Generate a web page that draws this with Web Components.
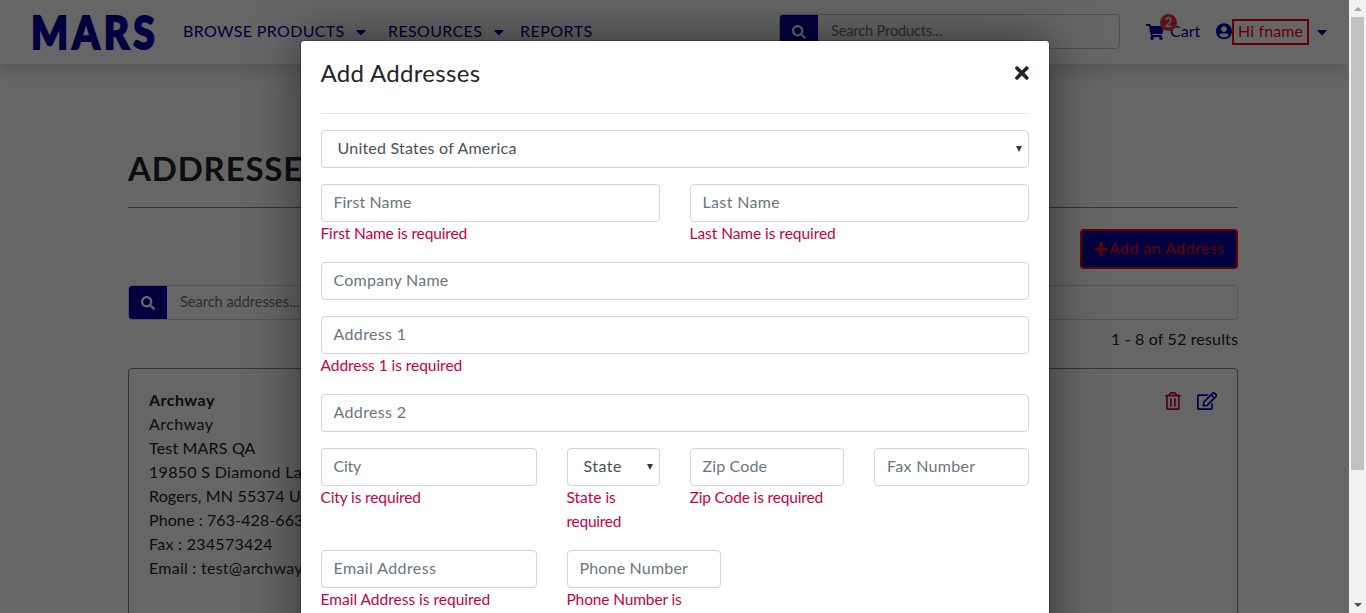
<!DOCTYPE html>
<html lang="en">
<head>
<meta charset="utf-8">
<title>Addresses</title>
<style>
html,body{margin:0;height:100%;overflow:hidden;background:#fff}
body{font:400 16px/24px Lato,"Noto Sans",sans-serif;color:#212529}
</style>
</head>
<body>
<app-page></app-page>
<script>
const ICONS={
caret:[320,'M31.3 192h257.3c17.8 0 26.7 21.5 14.1 34.1L174.1 354.8c-7.8 7.8-20.5 7.8-28.3 0L17.2 226.1C4.6 213.5 13.5 192 31.3 192z'],
search:[512,'M505 442.7L405.3 343c-4.5-4.5-10.6-7-17-7H372c27.6-35.3 44-79.7 44-128C416 93.1 322.9 0 208 0S0 93.1 0 208s93.1 208 208 208c48.3 0 92.7-16.4 128-44v16.3c0 6.4 2.5 12.5 7 17l99.7 99.7c9.4 9.4 24.6 9.4 33.9 0l28.3-28.3c9.4-9.4 9.4-24.6.1-34zM208 336c-70.7 0-128-57.2-128-128 0-70.7 57.2-128 128-128 70.7 0 128 57.2 128 128 0 70.7-57.2 128-128 128z'],
times:[352,'M242.72 256l100.07-100.07c12.28-12.28 12.28-32.19 0-44.48l-22.24-22.24c-12.28-12.28-32.19-12.28-44.48 0L176 189.28 75.93 89.21c-12.28-12.28-32.19-12.28-44.48 0L9.21 111.45c-12.28 12.28-12.28 32.19 0 44.48L109.28 256 9.21 356.07c-12.28 12.28-12.28 32.19 0 44.48l22.24 22.24c12.28 12.28 32.2 12.28 44.48 0L176 322.72l100.07 100.07c12.28 12.28 32.2 12.28 44.48 0l22.24-22.24c12.28-12.28 12.28-32.19 0-44.48L242.72 256z'],
cart:[576,'M528.12 301.319l47.273-208C578.806 78.301 567.391 64 551.99 64H159.208l-9.166-44.81C147.758 8.021 137.93 0 126.529 0H24C10.745 0 0 10.745 0 24v16c0 13.255 10.745 24 24 24h69.883l70.248 343.435C147.325 417.1 136 435.222 136 456c0 30.928 25.072 56 56 56s56-25.072 56-56c0-15.674-6.447-29.835-16.824-40h209.647C430.447 426.165 424 440.326 424 456c0 30.928 25.072 56 56 56s56-25.072 56-56c0-22.172-12.888-41.332-31.579-50.405l5.517-24.276c3.413-15.018-8.002-29.319-23.403-29.319H218.117l-6.545-32h293.145c11.206 0 20.92-7.754 23.403-18.681z'],
user:[496,'M248 8C111 8 0 119 0 256s111 248 248 248 248-111 248-248S385 8 248 8zm0 96c48.6 0 88 39.4 88 88s-39.4 88-88 88-88-39.4-88-88 39.4-88 88-88zm0 344c-58.7 0-111.3-26.6-146.5-68.2 18.8-35.4 55.6-59.8 98.5-59.8 2.4 0 4.8.4 7.1 1.1 13 4.2 26.6 6.9 40.9 6.9 14.3 0 28-2.7 40.9-6.9 2.3-.7 4.7-1.1 7.1-1.1 42.9 0 79.7 24.4 98.5 59.8C359.3 421.4 306.7 448 248 448z'],
plus:[448,'M416 208H272V64c0-17.67-14.33-32-32-32h-32c-17.67 0-32 14.33-32 32v144H32c-17.67 0-32 14.33-32 32v32c0 17.67 14.33 32 32 32h144v144c0 17.67 14.33 32 32 32h32c17.67 0 32-14.33 32-32V304h144c17.67 0 32-14.33 32-32v-32c0-17.67-14.33-32-32-32z'],
trash:[448,'M268 416h24a12 12 0 0 0 12-12V188a12 12 0 0 0-12-12h-24a12 12 0 0 0-12 12v216a12 12 0 0 0 12 12zM432 80h-82.41l-34-56.7A48 48 0 0 0 274.41 0H173.59a48 48 0 0 0-41.16 23.3L98.41 80H16A16 16 0 0 0 0 96v16a16 16 0 0 0 16 16h16v336a48 48 0 0 0 48 48h288a48 48 0 0 0 48-48V128h16a16 16 0 0 0 16-16V96a16 16 0 0 0-16-16zM171.84 50.91A6 6 0 0 1 177 48h94a6 6 0 0 1 5.15 2.91L293.61 80H154.39zM368 464H80V128h288zm-212-48h24a12 12 0 0 0 12-12V188a12 12 0 0 0-12-12h-24a12 12 0 0 0-12 12v216a12 12 0 0 0 12 12z'],
edit:[576,'M402.3 344.9l32-32c5-5 13.7-1.5 13.7 5.7V464c0 26.5-21.5 48-48 48H48c-26.5 0-48-21.5-48-48V112c0-26.5 21.5-48 48-48h273.5c7.1 0 10.7 8.6 5.7 13.7l-32 32c-1.5 1.5-3.5 2.3-5.7 2.3H48v352h352V350.5c0-2.1.8-4.1 2.3-5.6zm156.6-201.8L296.3 405.7l-90.4 10c-26.2 2.9-48.5-19.2-45.6-45.6l10-90.4L432.9 17.1c22.9-22.9 59.9-22.9 82.7 0l43.2 43.2c22.9 22.9 22.9 60 .1 82.8zM460.1 174L402 115.9 216.2 301.8l-7.3 65.3 65.3-7.3L460.1 174zm64.8-79.7l-43.2-43.2c-4.1-4.1-10.8-4.1-14.8 0L436 82l58.1 58.1 30.9-30.9c4-4.2 4-10.8-.1-14.9z']
};
function define(name,render,after){
  customElements.define(name,class extends HTMLElement{
    connectedCallback(){
      if(this.shadowRoot)return;
      this.attachShadow({mode:'open'}).innerHTML=render(this);
      if(after)after(this);
    }
  });
}
const attr=(e,n,d='')=>e.getAttribute(n)??d;

/* SVG icon, sized by its height */
define('app-icon',e=>{
  const [w,d]=ICONS[attr(e,'name')],s=+attr(e,'size','16');
  return `<style>:host{display:block;flex:none;width:${w/512*s}px;height:${s}px}svg{display:block;width:100%;height:100%}</style><svg viewBox="0 0 ${w} 512" fill="currentColor"><path d="${d}"/></svg>`;
});

/* One line of text whose tracking is adjusted to a given width */
define('fit-text',e=>`<style>:host{display:block;flex:none;white-space:nowrap;width:${attr(e,'w')}px;transform:translateY(-1px)}span{display:inline-block;white-space:pre}</style><span>${attr(e,'text')}</span>`,e=>{
  const s=e.shadowRoot.querySelector('span'),n=attr(e,'text').length;
  s.style.letterSpacing=((+attr(e,'w')-s.offsetWidth)/(n-.5)).toFixed(3)+'px';
});

define('nav-bar',()=>`<style>
:host{display:flex;align-items:center;box-sizing:border-box;height:64px;padding-left:32px;color:#0000a0;background:#fff;box-shadow:0 8px 16px rgba(0,0,0,.15);position:relative}
.logo{font-weight:900;font-size:46.5px;line-height:60px;transform:translate(-1px,-1px) scaleX(.84);transform-origin:0 50%;margin-right:-26px;-webkit-text-stroke:2px #0000a0}
.link{margin-top:-1px}
search-box{width:341px;margin-left:187px;margin-top:-1px}
.cart{position:relative;display:flex;align-items:center;margin-left:26px;gap:6px;margin-top:-1px}
.cart fit-text{line-height:16px}
.badge{position:absolute;left:14px;top:-10px;width:17px;height:17px;border-radius:50%;background:#dc3545;color:#fff;font-size:13px;display:grid;place-items:center;line-height:13px}
.hi{box-sizing:border-box;border:2px solid red;color:red;height:26px;line-height:22px;width:77px;padding-left:4px;margin-top:-1px}
</style>
<fit-text class="logo" w="150" text="MARS"></fit-text>
<fit-text class="link" style="margin-left:27px" w="161" text="BROWSE PRODUCTS"></fit-text><app-icon name="caret" style="margin-left:12px;margin-top:-1px"></app-icon>
<fit-text class="link" style="margin-left:22px" w="94" text="RESOURCES"></fit-text><app-icon name="caret" style="margin-left:12px;margin-top:-1px"></app-icon>
<fit-text class="link" style="margin-left:16px" w="72" text="REPORTS"></fit-text>
<search-box text="Search Products..." w="111" solid></search-box>
<div class="cart"><app-icon name="cart"></app-icon><fit-text w="30" text="Cart"></fit-text><span class="badge">2</span></div>
<app-icon name="user" size="16.5" style="margin-left:16px;margin-top:-1px"></app-icon>
<div class="hi"><fit-text w="65" text="Hi fname"></fit-text></div>
<app-icon name="caret" style="margin-left:8px;margin-top:-1px"></app-icon>`);

define('search-box',e=>`<style>
:host{display:flex;box-sizing:border-box;height:35px;border:1px solid ${e.hasAttribute('solid')?'#bfc6d4':'#ced4da'};border-radius:4px;overflow:hidden;background:#fff}
.b{width:38px;background:#0000a0;color:#fff;display:grid;place-items:center;flex:none}
fit-text{font-size:14.5px;line-height:34px;color:#6c757d;margin-left:13px}
</style><div class="b"><app-icon name="search" size="14"></app-icon></div><fit-text w="${attr(e,'w')}" text="${attr(e,'text')}"></fit-text>`);

define('address-card',()=>`<style>
:host{display:flex;justify-content:space-between;box-sizing:border-box;height:300px;border:1px solid #7d8082;border-radius:4px;padding:20px}
.icons{display:flex;gap:16px;margin-top:3px}
</style><div><fit-text style="font-weight:700" w="66" text="Archway"></fit-text>
<fit-text w="64" text="Archway"></fit-text>
<fit-text w="107" text="Test MARS QA"></fit-text>
<fit-text w="170" text="19850 S Diamond Lake"></fit-text>
<fit-text w="171" text="Rogers, MN 55374 USA"></fit-text>
<fit-text w="164" text="Phone : 763-428-6630"></fit-text>
<fit-text w="124" text="Fax : 234573424"></fit-text>
<fit-text w="188" text="Email : test@archway.com"></fit-text></div>
<div class="icons"><app-icon name="trash" size="18" style="color:#c3004b"></app-icon><app-icon name="edit" size="18" style="color:#0000a0"></app-icon></div>`);

define('address-page',()=>`<style>
:host{display:block;margin:0 111px 0 128px;padding-top:82px}
h1{margin:0;height:61px;border-bottom:1px solid #7d8082;font-size:33px;line-height:46px;font-weight:700}
.add{display:flex;align-items:center;box-sizing:border-box;width:158px;height:40px;border:2px solid red;border-radius:4px;background:#0000a0;color:red;padding-left:12px;margin:21px 0 16px auto}
.count{display:flex;justify-content:flex-end;margin:8px 0 16px}
</style>
<h1><fit-text w="194" text="ADDRESSES"></fit-text></h1>
<div class="add"><app-icon name="plus"></app-icon><fit-text w="116" text="Add an Address" style="margin-left:1px"></fit-text></div>
<search-box text="Search addresses..." w="119"></search-box>
<div class="count"><fit-text w="127" text="1 - 8 of 52 results"></fit-text></div>
<address-card></address-card>`);

/* Form control with its validation message */
define('form-field',e=>{
  const sel=e.hasAttribute('select');
  return `<style>
:host{display:block;grid-column:span ${attr(e,'span','12')}}
.c{display:flex;align-items:center;justify-content:space-between;box-sizing:border-box;height:38px;border:1px solid #ced4da;border-radius:4px;background:#fff;color:${sel?'#495057':'#6c757d'};padding:0 6px 0 ${sel?16:12}px}
.e{color:#c3004b;font-size:15.5px}
i{width:0;border:3.2px solid transparent;border-top:6px solid #343a40;border-bottom:0}
</style><div class="c"><fit-text w="${attr(e,'w')}" text="${attr(e,'text')}"></fit-text>${sel?'<i></i>':''}</div><div class="e"><slot></slot></div>`;
});

define('address-modal',()=>`<style>
:host{display:block;box-sizing:border-box;width:750px;height:640px;margin:40px 0 0 299.5px;padding:0 20px;background:#fff;background-clip:padding-box;border:1px solid rgba(0,0,0,.2);border-radius:4px;box-shadow:0 0 50px rgba(0,0,0,.5)}
header{display:flex;justify-content:space-between;height:72px;border-bottom:1px solid #e5e5e5;font-size:24px;line-height:65px;color:#212529}
.grid{display:grid;grid-template-columns:repeat(12,31.5px);column-gap:30px;row-gap:16px;padding-top:16px}
</style>
<header><fit-text w="160" text="Add Addresses"></fit-text><app-icon name="times" size="20" style="margin-top:22px"></app-icon></header>
<div class="grid">
<form-field select w="179" text="United States of America"></form-field>
<form-field span="6" w="78" text="First Name"><fit-text w="147" text="First Name is required"></fit-text></form-field>
<form-field span="6" w="77" text="Last Name"><fit-text w="146" text="Last Name is required"></fit-text></form-field>
<form-field w="115" text="Company Name"></form-field>
<form-field w="73" text="Address 1"><fit-text w="142" text="Address 1 is required"></fit-text></form-field>
<form-field w="73" text="Address 2"></form-field>
<form-field span="4" w="28" text="City"><fit-text w="100" text="City is required"></fit-text></form-field>
<form-field span="2" select w="38" text="State"><fit-text w="49" text="State is"></fit-text><fit-text w="55" text="required"></fit-text></form-field>
<form-field span="3" w="65" text="Zip Code"><fit-text w="134" text="Zip Code is required"></fit-text></form-field>
<form-field span="3" w="88" text="Fax Number"></form-field>
<form-field span="4" w="103" text="Email Address"><fit-text w="170" text="Email Address is required"></fit-text></form-field>
<form-field span="3" w="108" text="Phone Number"><fit-text w="115" text="Phone Number is"></fit-text></form-field>
</div>`);

define('scroll-bar',()=>`<style>
:host{display:flex;flex-direction:column;align-items:center;width:17px;height:613px;background:#f1f1f1}
.u,.d{height:17px;display:grid;place-items:center}
i{display:block;border:4px solid transparent}
.u i{border-bottom-color:#a3a3a3;border-top:0}.d i{border-top-color:#505050;border-bottom:0}
.t{width:13px;height:453px;background:#c1c1c1;margin-bottom:auto}
</style><div class="u"><i></i></div><div class="t"></div><div class="d"><i></i></div>`);

define('app-page',()=>`<style>
:host{display:grid;grid-template-columns:1349px 17px;height:613px;overflow:hidden}
main{position:relative;height:613px;overflow:hidden}
.overlay{position:absolute;inset:0;overflow:hidden;background:rgba(0,0,0,.6);display:flex;align-items:flex-start}
</style><main><nav-bar></nav-bar><address-page></address-page><div class="overlay"><address-modal></address-modal></div></main><scroll-bar></scroll-bar>`);
</script>
</body>
</html>
